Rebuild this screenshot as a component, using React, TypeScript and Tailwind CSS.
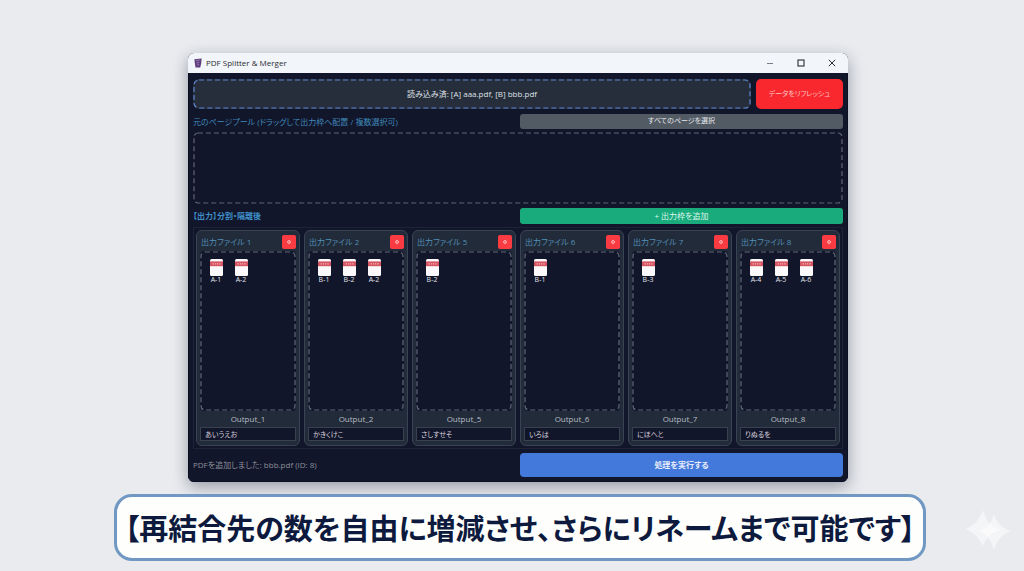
import React from "react";

interface OutputFile {
  id: number;
  pages: string[];
  rename: string;
}

const outputs: OutputFile[] = [
  { id: 1, pages: ["A-1", "A-2"], rename: "あいうえお" },
  { id: 2, pages: ["B-1", "B-2", "A-2"], rename: "かきくけこ" },
  { id: 5, pages: ["B-2"], rename: "さしすせそ" },
  { id: 6, pages: ["B-1"], rename: "いろは" },
  { id: 7, pages: ["B-3"], rename: "にほへと" },
  { id: 8, pages: ["A-4", "A-5", "A-6"], rename: "りぬるを" },
];

const PdfIcon: React.FC = () => (
  <svg width="13" height="17" viewBox="0 0 13 17" aria-hidden="true">
    <rect x="0" y="0" width="13" height="17" rx="1.5" fill="#fbf9fb" />
    <rect x="0" y="2.4" width="13" height="4.8" fill="#d65563" />
    <path d="M2.5 4.8h1.4M5 4.8h1.2M7 4.8h1.2M9.2 4.8h1.4" stroke="#f0b0b8" strokeWidth="1.2" />
  </svg>
);

const TitleBar: React.FC = () => (
  <header className="flex h-5 items-center bg-[#f2f5f9] pl-[6px] pr-px text-[#2b2d33]">
    <svg width="8" height="10" viewBox="0 0 8 10" aria-hidden="true">
      <path d="M.4 1.2 7.6.6 7.2 5.5 6.2 9.6 1.6 9.4.8 5z" fill="#5d3d7c" />
      <path d="M2 2.6 5.8 2M2.4 5l2.8-.6M3 7l2-.4" stroke="#a88bc0" strokeWidth=".8" />
    </svg>
    <h1 className="ml-1 text-[8px]">PDF Splitter &amp; Merger</h1>
    <div className="ml-auto flex">
      <button aria-label="最小化" className="flex h-5 w-[31px] items-center justify-center">
        <svg width="8" height="8" viewBox="0 0 8 8" stroke="#7a7d83" strokeWidth="1">
          <path d="M1 4.5h6" />
        </svg>
      </button>
      <button aria-label="最大化" className="flex h-5 w-[31px] items-center justify-center">
        <svg width="8" height="8" viewBox="0 0 8 8" fill="none" stroke="#2b2d33" strokeWidth="1.1">
          <rect x="1" y="1" width="6" height="6" />
        </svg>
      </button>
      <button aria-label="閉じる" className="flex h-5 w-[31px] items-center justify-center">
        <svg width="8" height="8" viewBox="0 0 8 8" stroke="#2b2d33" strokeWidth="1">
          <path d="M.8.8l6.4 6.4M7.2.8L.8 7.2" />
        </svg>
      </button>
    </div>
  </header>
);

// 破線の枠。色は親の text-* から取る
const DashedFrame: React.FC<{ radius: number }> = ({ radius }) => (
  <svg
    className="pointer-events-none absolute inset-px h-[calc(100%-2px)] w-[calc(100%-2px)] overflow-visible"
    aria-hidden="true"
  >
    <rect
      width="100%"
      height="100%"
      rx={radius}
      fill="none"
      stroke="currentColor"
      strokeWidth="1.2"
      strokeDasharray="5 3"
    />
  </svg>
);

const OutputCard: React.FC<{ file: OutputFile }> = ({ file }) => (
  <section className="rounded-md border border-[#394353] bg-[#222b39] px-[3px] pb-1 pt-[3px]">
    <div className="flex h-[15px] items-center justify-between">
      <h3 className="whitespace-nowrap pl-px text-[8px] text-[#5190b8]">出力ファイル {file.id}</h3>
      <button
        aria-label={`出力ファイル ${file.id} を削除`}
        className="flex h-[14px] w-[14px] items-center justify-center rounded-xs bg-[#fb3b42]"
      >
        <svg width="4" height="4" viewBox="0 0 4 4" fill="none" stroke="#ffc4c6">
          <circle cx="2" cy="2" r="1.4" />
        </svg>
      </button>
    </div>
    <div className="relative mt-[2px] flex h-[160px] gap-[5px] rounded-sm bg-[#12162b] pl-[6px] pt-2 text-[#626877]">
      <DashedFrame radius={4} />
      {file.pages.map((page) => (
        <div key={page} className="flex w-5 flex-col items-center">
          <PdfIcon />
          <span className="text-[7px] leading-[7px] text-[#e3e4ea]">{page}</span>
        </div>
      ))}
    </div>
    <label
      htmlFor={`rename-${file.id}`}
      className="block text-center text-[8px] leading-4 text-[#b8bcc5]"
    >
      Output_{file.id}
    </label>
    <input
      id={`rename-${file.id}`}
      defaultValue={file.rename}
      className="block h-[14px] w-full border border-[#39414f] bg-[#12162b] px-1 text-[7px] text-[#d6d0dc]"
    />
  </section>
);

const App: React.FC = () => (
  <div className="relative flex min-h-screen flex-col items-center bg-[#e9ebef] pb-2 pl-3 pt-[53px] font-['Open_Sans','Noto_Sans_CJK_JP',sans-serif] [font-feature-settings:'palt']">
    <main className="w-full max-w-[660px] overflow-hidden rounded-md bg-[#12162b] shadow-[0_5px_16px_rgba(30,35,55,0.4)]">
      <TitleBar />
      <div className="border-x border-b border-[#0b0f22] px-1 pb-1 pt-[6px]">
        <div className="flex gap-[5px]">
          <div className="relative flex h-[30px] flex-1 items-center justify-center rounded-md bg-[#272e3b] text-[#5c86d0]">
            <DashedFrame radius={5} />
            <span className="text-[8px] text-[#dfe2e8]">読み込み済: [A] aaa.pdf, [B] bbb.pdf</span>
          </div>
          <button className="h-[30px] w-[87px] rounded-[5px] bg-[#f8282e] text-[7px] text-[#ffc1c1]">
            データをリフレッシュ
          </button>
        </div>

        <div className="mt-[5px] grid h-[15px] grid-cols-2 items-center gap-1">
          <h2 className="whitespace-nowrap text-[8px] text-[#3f88b8]">
            元のページプール (ドラッグして出力枠へ配置 / 複数選択可)
          </h2>
          <button className="h-[15px] rounded-[3px] bg-[#525a64] text-[7px] text-[#e4e6ea]">
            すべてのページを選択
          </button>
        </div>

        <div className="relative mt-[3px] h-[72px] text-[#5f6471]">
          <DashedFrame radius={4} />
        </div>

        <div className="mt-1 grid h-4 grid-cols-2 items-center gap-1">
          <h2 className="text-[8px] font-semibold text-[#3f8fc9]">【出力】分割・隔離後</h2>
          <button className="h-4 rounded-[3px] bg-[#1aab7c] text-[8px] text-[#dcf6ec]">
            + 出力枠を追加
          </button>
        </div>

        <div className="mt-[3px] grid grid-cols-6 gap-1 border border-[#1d2438] p-[2px]">
          {outputs.map((file) => (
            <OutputCard key={file.id} file={file} />
          ))}
        </div>

        <footer className="mt-1 grid grid-cols-2 items-center gap-1">
          <p className="text-[8px] text-[#8b8e98]">PDFを追加しました: bbb.pdf (ID: 8)</p>
          <button className="h-6 rounded-[4px] bg-[#4479dc] text-[8px] font-semibold text-[#e6edfc]">
            処理を実行する
          </button>
        </footer>
      </div>
    </main>

    <p className="ml-1 mt-3 flex h-[67px] items-center whitespace-nowrap rounded-[18px] border-[3px] border-[#7098c2] bg-[#fefefc] px-2 font-['Noto_Sans_CJK_JP',sans-serif] text-[29px] font-bold text-[#0d1a3e]">
      【再結合先の数を自由に増減させ、さらにリネームまで可能です】
    </p>

    <svg className="absolute bottom-5 right-3 h-[42px] w-[48px]" viewBox="0 0 48 42" fill="#fff" aria-hidden="true">
      <path d="M19 1c3 11 7 16 18 20-11 3-15 8-18 16C15 29 11 24 1 20 11 16 15 11 19 1z" opacity=".5" />
      <path d="M30 5c3 9 7 14 17 17-10 4-14 9-17 19-3-10-6-15-15-19 9-3 12-8 15-17z" opacity=".5" />
    </svg>
  </div>
);

export default App;
